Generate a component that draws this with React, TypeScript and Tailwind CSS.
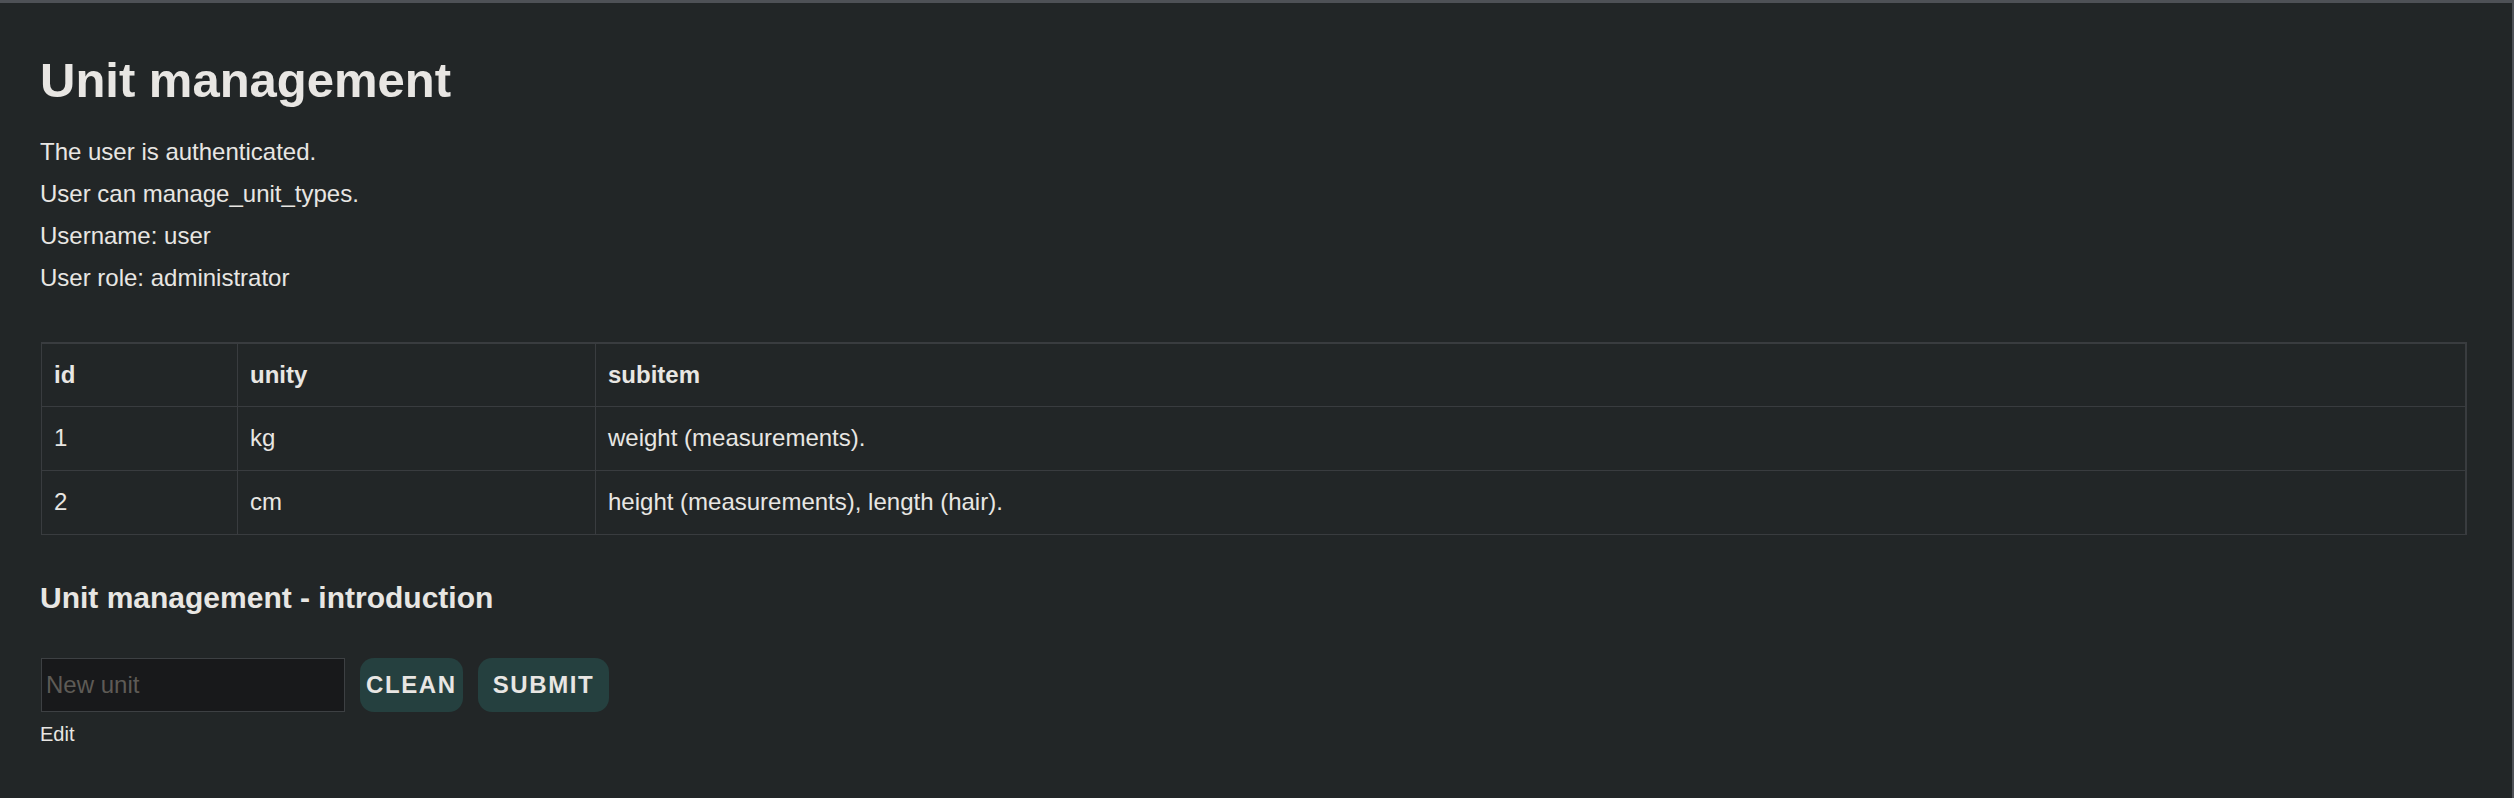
import {useState} from "react";

type UnitRow = {
  id: number;
  unity: string;
  subitem: string;
};

const units: UnitRow[] = [
  {id: 1, unity: 'kg', subitem: 'weight (measurements).'},
  {id: 2, unity: 'cm', subitem: 'height (measurements), length (hair).'},
];

export default function App() {
  const [newUnit, setNewUnit] = useState('');

  // Clear the input field
  const handleClean = () => {
    setNewUnit('');
  };

  const handleSubmit = (e: React.FormEvent) => {
    e.preventDefault();
  };

  return (
    <div className="min-h-screen bg-[#222627] border-t-[3px] border-r-[2px] border-[#4e5156] pt-[49px] pl-[40px] text-[#e8e6e3] font-['Liberation_Sans',Arial,sans-serif]">
      <h1 className="text-[49px] leading-[56px] font-bold">Unit management</h1>

      <div className="mt-[23px] text-[24px] leading-[42px]">
        <p>The user is authenticated.</p>
        <p>User can manage_unit_types.</p>
        <p>Username: user</p>
        <p>User role: administrator</p>
      </div>

      <table className="mt-[43px] ml-px w-[2426px] table-fixed border-collapse border-t-2 border-r-2 border-[#393c3f] text-[24px] text-left">
        <colgroup>
          <col className="w-[196px]"/>
          <col className="w-[358px]"/>
          <col/>
        </colgroup>
        <thead>
          <tr className="h-[63px]">
            <th className="border border-[#393c3f] px-[12px] font-bold">id</th>
            <th className="border border-[#393c3f] px-[12px] font-bold">unity</th>
            <th className="border border-[#393c3f] px-[12px] font-bold">subitem</th>
          </tr>
        </thead>
        <tbody>
          {units.map((unit) => (
            <tr key={unit.id} className="h-[64px]">
              <td className="border border-[#393c3f] px-[12px]">{unit.id}</td>
              <td className="border border-[#393c3f] px-[12px]">{unit.unity}</td>
              <td className="border border-[#393c3f] px-[12px]">{unit.subitem}</td>
            </tr>
          ))}
        </tbody>
      </table>

      <h3 className="mt-[46px] text-[30px] leading-[34px] font-bold">Unit management - introduction</h3>

      <form onSubmit={handleSubmit} className="mt-[43px]">
        <div className="flex items-stretch gap-[15px] ml-px">
          <input
            type="text"
            placeholder="New unit"
            value={newUnit}
            onChange={(e) => setNewUnit(e.target.value)}
            className="w-[304px] h-[54px] border border-[#3d4043] bg-[#18191b] pl-[4px] text-[24px] text-[#e8e6e3] placeholder:text-[#5e5b56] outline-none"
          />
          <button
            type="button"
            onClick={handleClean}
            className="h-[54px] rounded-[14px] bg-[#25403f] px-[6px] text-[24px] font-bold tracking-[1.6px] text-[#e8e6e3]"
          >
            CLEAN
          </button>
          <button
            type="submit"
            className="h-[54px] rounded-[14px] bg-[#25403f] px-[15px] text-[24px] font-bold tracking-[1.6px] text-[#e8e6e3]"
          >
            SUBMIT
          </button>
        </div>
        <small className="block mt-[7px] text-[20px]">Edit</small>
      </form>
    </div>
  );
}
